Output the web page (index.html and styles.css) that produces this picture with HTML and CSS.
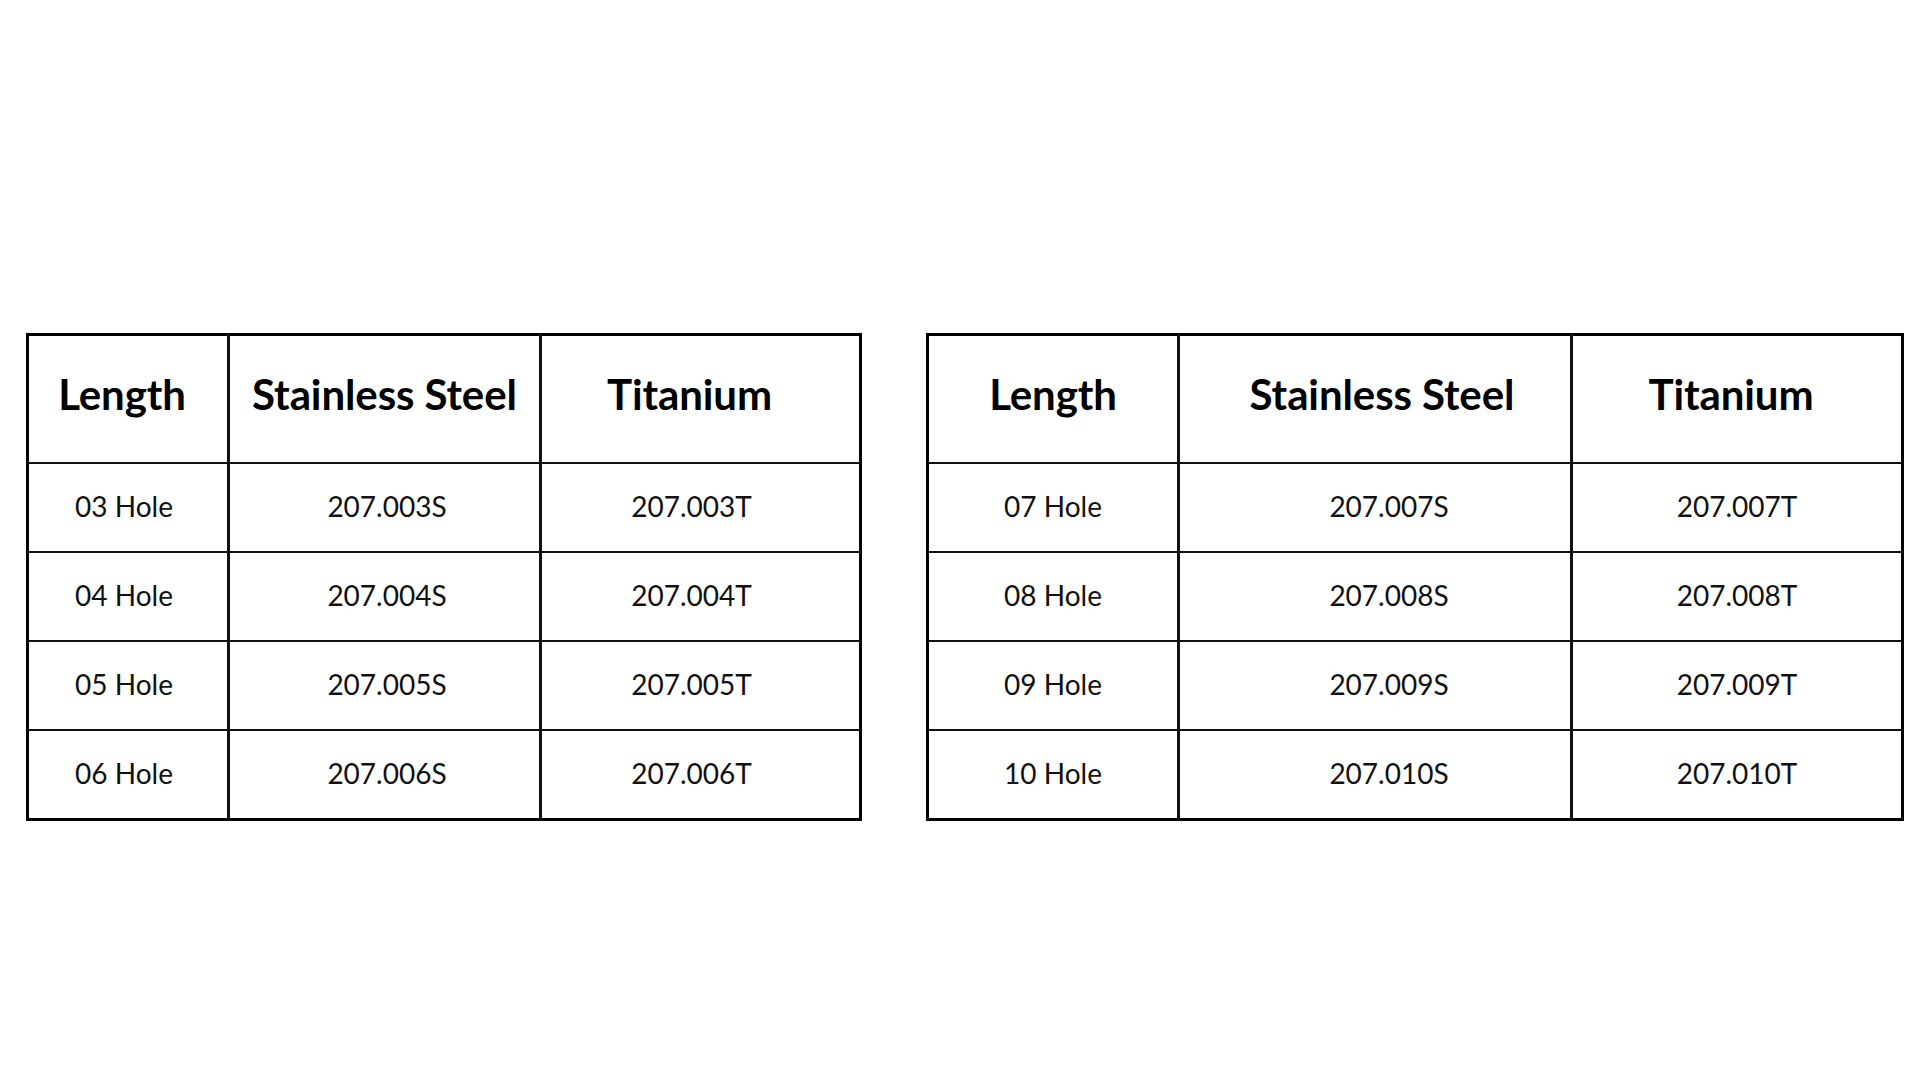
FILE: index.html
```html
<!DOCTYPE html>
<html lang="en">
<head>
<meta charset="utf-8">
<title>Hole Plates</title>
<link rel="stylesheet" href="styles.css">
</head>
<body>
<main class="page">
  <table class="spec spec-left">
    <colgroup><col class="c1"><col class="c2"><col class="c3"></colgroup>
    <thead>
      <tr><th>Length</th><th>Stainless Steel</th><th>Titanium</th></tr>
    </thead>
    <tbody>
      <tr><td>03 Hole</td><td>207.003S</td><td>207.003T</td></tr>
      <tr><td>04 Hole</td><td>207.004S</td><td>207.004T</td></tr>
      <tr><td>05 Hole</td><td>207.005S</td><td>207.005T</td></tr>
      <tr><td>06 Hole</td><td>207.006S</td><td>207.006T</td></tr>
    </tbody>
  </table>
  <table class="spec spec-right">
    <colgroup><col class="c1"><col class="c2"><col class="c3"></colgroup>
    <thead>
      <tr><th>Length</th><th>Stainless Steel</th><th>Titanium</th></tr>
    </thead>
    <tbody>
      <tr><td>07 Hole</td><td>207.007S</td><td>207.007T</td></tr>
      <tr><td>08 Hole</td><td>207.008S</td><td>207.008T</td></tr>
      <tr><td>09 Hole</td><td>207.009S</td><td>207.009T</td></tr>
      <tr><td>10 Hole</td><td>207.010S</td><td>207.010T</td></tr>
    </tbody>
  </table>
</main>
</body>
</html>
```

FILE: styles.css
```css
html, body {
  margin: 0;
  padding: 0;
  background: #ffffff;
}

.page {
  display: flex;
  align-items: flex-start;
  gap: 64px;
  padding: 333px 0 0 26px;
  font-family: "Lato", "Inter", sans-serif;
  color: #000;
}

.spec {
  border-collapse: collapse;
  table-layout: fixed;
  border: 3px solid #000;
}

.spec-left { width: 833px; }
.spec-left .c1 { width: 201px; }
.spec-left .c2 { width: 312px; }
.spec-left .c3 { width: 320px; }

.spec-right { width: 975px; }
.spec-right .c1 { width: 251px; }
.spec-right .c2 { width: 393px; }
.spec-right .c3 { width: 331px; }

.spec th,
.spec td {
  border: 2px solid #111;
  text-align: center;
  vertical-align: middle;
  padding: 0;
}

.spec th {
  height: 116px;
  font-size: 42px;
  font-weight: 700;
  line-height: 1;
  padding-bottom: 10px;
  letter-spacing: -0.1px;
}

.spec td {
  height: 83px;
  font-size: 28px;
  font-weight: 400;
  line-height: 1;
  color: #111;
  padding-bottom: 4px;
}

.spec th + th,
.spec td + td {
  border-left-width: 3px;
}

/* slight off-centre placements seen in the original */
.spec-left th:nth-child(1) { padding-right: 12px; }
.spec-left th:nth-child(3) { padding-right: 22px; }
.spec-left td:nth-child(1) { padding-right: 8px; }
.spec-left td:nth-child(2) { padding-left: 5px; }
.spec-left td:nth-child(3) { padding-right: 18px; }

.spec-right th:nth-child(2) { padding-left: 14px; }
.spec-right th:nth-child(3) { padding-right: 12px; }
.spec-right td:nth-child(2) { padding-left: 28px; }
```
